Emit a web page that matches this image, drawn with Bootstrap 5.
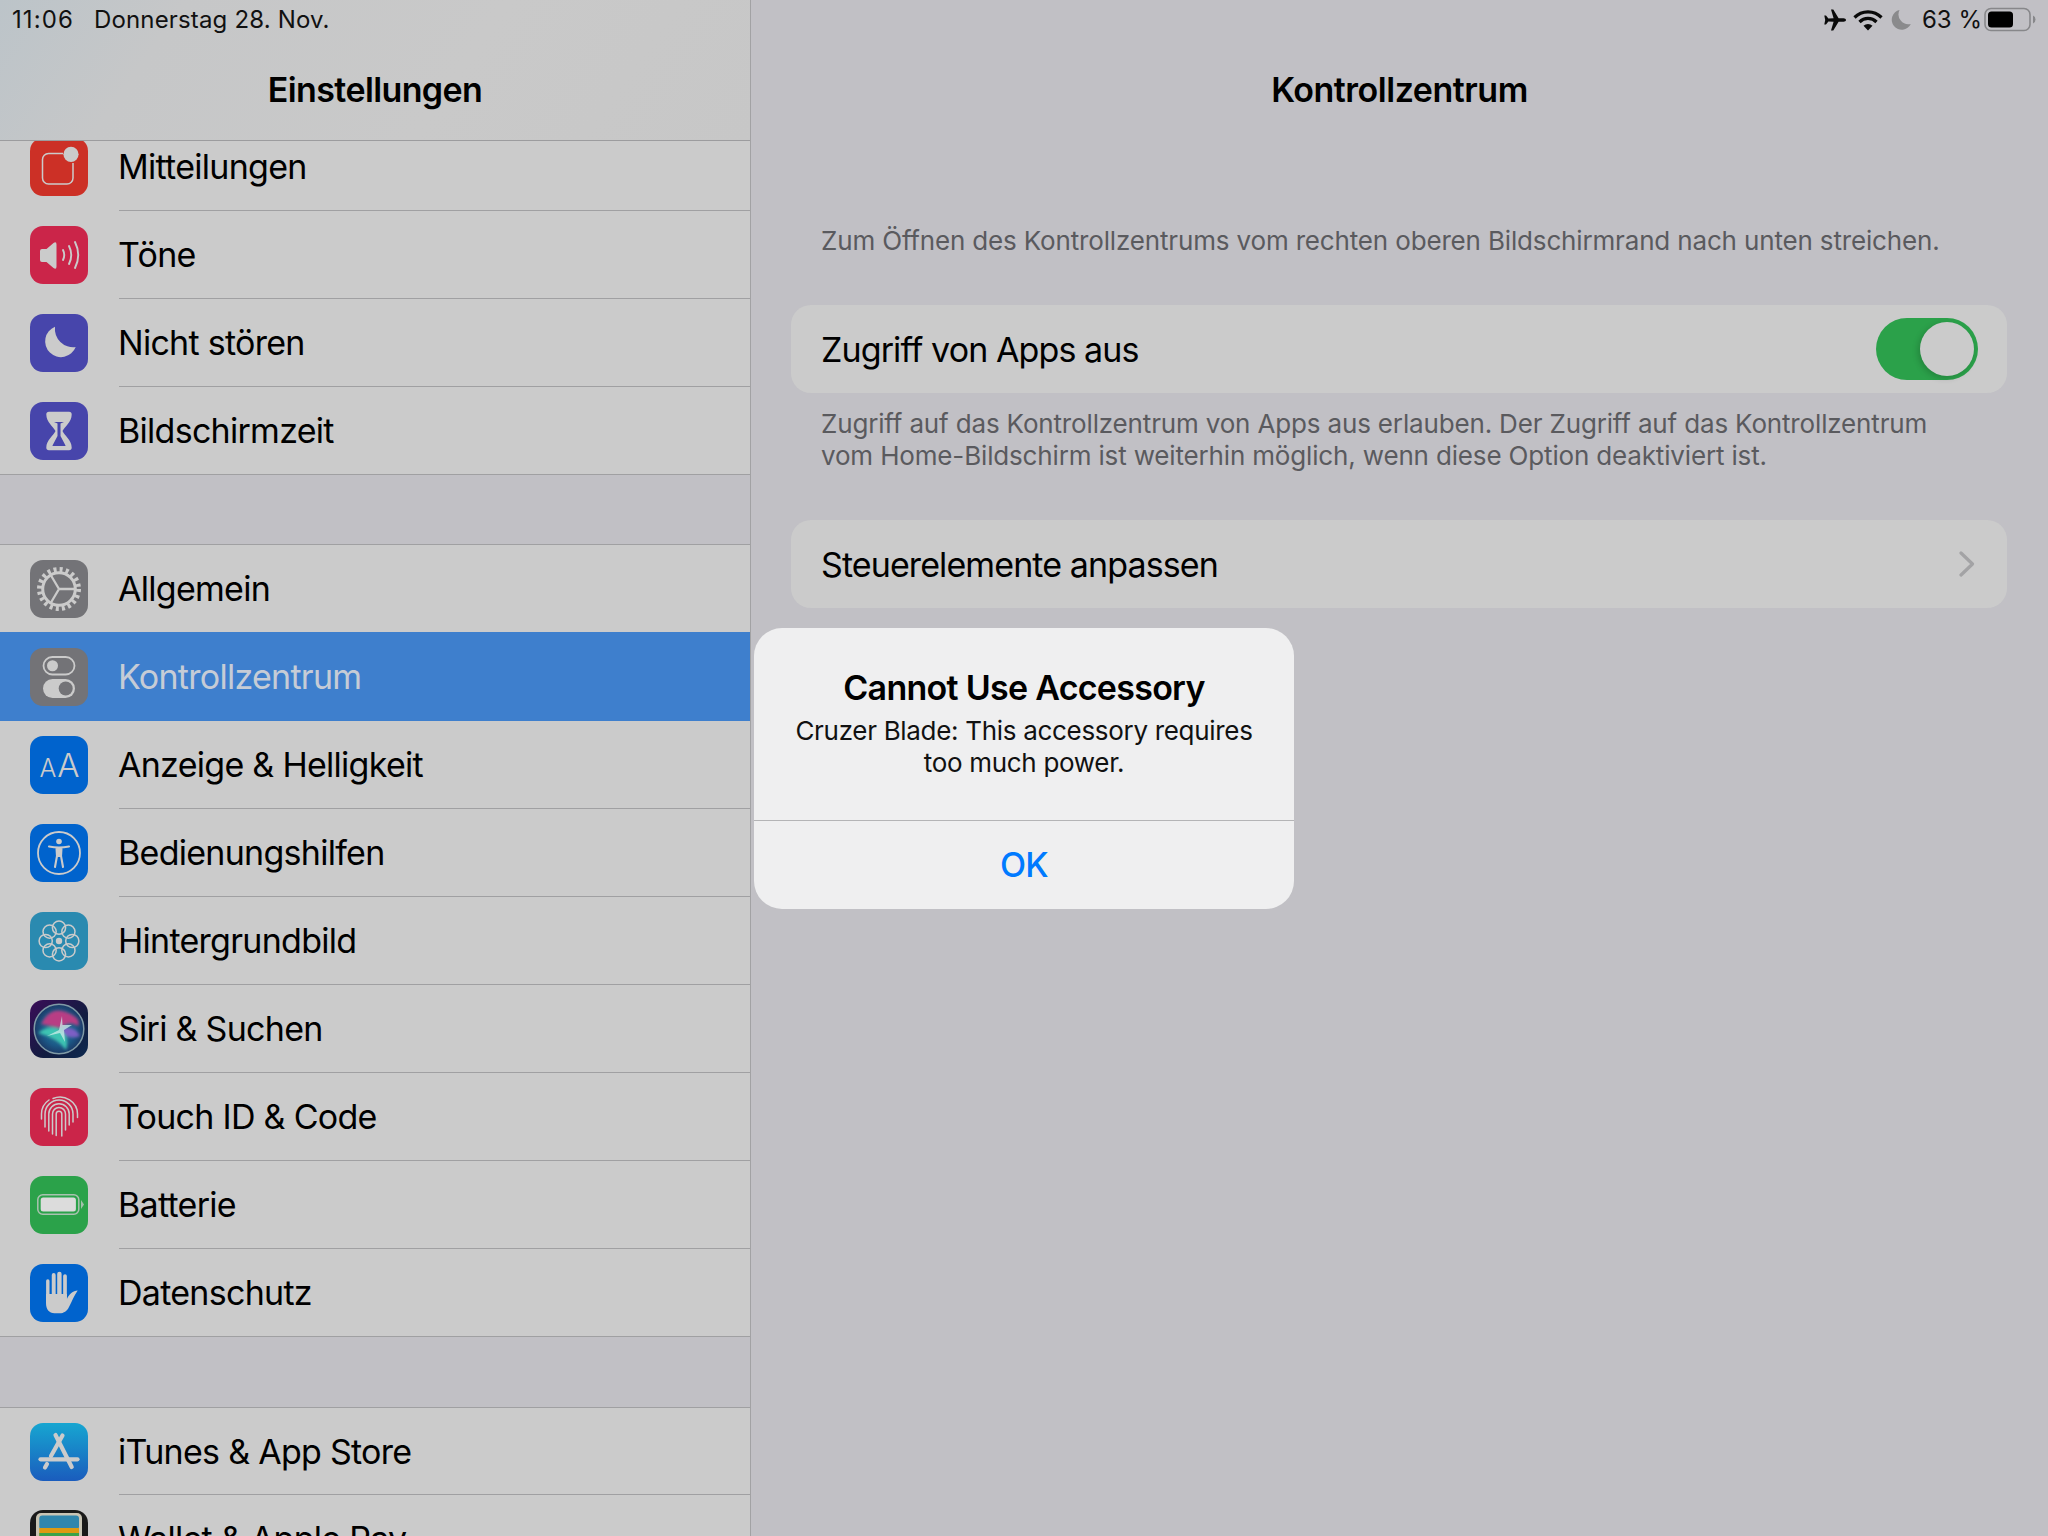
<!DOCTYPE html>
<html lang="de">
<head>
<meta charset="utf-8">
<title>Kontrollzentrum</title>
<link href="https://cdn.jsdelivr.net/npm/bootstrap@5.3.0/dist/css/bootstrap.min.css" rel="stylesheet">
<style>
html,body{margin:0;background:#c1c0c5;}
body{font-family:Inter,"Liberation Sans",sans-serif;color:#000;}
.ipad{width:2048px;height:1536px;overflow:hidden;position:relative;background:#c1c0c5;}
.side{width:751px;flex:none;border-right:1px solid #a2a2a4;background:#c1c0c5;}
.side-head{height:141px;border-bottom:1px solid #9c9c9e;background:linear-gradient(125deg,#bcc4c9 0,#c6c7c8 22%,#c9c9c9 60%,#c7c7c7 100%);position:relative;}
.clock{height:40px;font-size:24px;letter-spacing:.16px;color:#111;padding-left:12px;gap:20px;}
.clock-time{letter-spacing:1.1px;}
.bar-title{font-size:34px;font-weight:600;letter-spacing:-.62px;line-height:40px;text-align:center;}
.side-head .bar-title{margin-top:30px;}
.side-scroll{height:1395px;overflow:hidden;}
.rows{background:#cbcbcb;border-bottom:1px solid #a0a0a2;}
.rows-first{margin-top:-18px;}
.rows-next{margin-top:70px;border-top:1px solid #a0a0a2;}
.rows-second{margin-top:69px;}
.rows-next .s-row:first-child{height:87px;}
.s-row{height:88px;padding-left:30px;position:relative;font-size:34px;letter-spacing:-.72px;line-height:40px;}
.s-row::after{content:"";position:absolute;left:119px;right:0;bottom:0;height:1px;background:#a0a0a2;}
.s-row.last::after,.s-row.before-sel::after,.s-row.sel::after{display:none;}
.s-row.last{height:87px;}
.s-row.sel{background:#3e7fcd;color:#c6ccd6;height:89px;}
.s-row.sel .ico{margin-top:1px;}
.ico{width:58px;height:58px;flex:none;margin-right:30px;display:block;}
.main-pane{flex:1 1 auto;min-width:0;}
.main-head{height:140px;position:relative;}
.main-head .bar-title{padding-top:70px;letter-spacing:-.48px;}
.status-r{position:absolute;top:0;right:12px;height:40px;font-size:24px;letter-spacing:0;color:#111;}
.moon-gap{margin-right:11px;}
.plane-gap{margin-right:6px;}
.batt-gap{margin-left:2px;}
.foot{font-size:26px;letter-spacing:-.16px;line-height:32px;color:#5a5a5e;padding:0 70px;margin-bottom:0;}
.foot-a{margin-top:85px;height:80px;}
.foot-b{margin-top:15px;height:112px;}
.cell{height:88px;margin:0 41px 0 40px;background:#cbcbcb;border-radius:20px;padding:0 30px;font-size:34px;letter-spacing:-.9px;}
.sw{width:102px;height:62px;border-radius:31px;background:#2ba14a;position:relative;margin-right:-1px;}
.sw::after{content:"";position:absolute;right:4px;top:4px;width:54px;height:54px;border-radius:50%;background:#cbcbcb;box-shadow:-2px 2px 6px rgba(0,0,0,.18);}
.chev{margin-right:2px;}
.alert-box{position:absolute;left:754px;top:628px;width:540px;height:281px;background:#efeff0;border-radius:28px;text-align:center;}
.alert-text{height:193px;padding-top:40px;border-bottom:1px solid #b4b4b6;}
.alert-title{font-size:34px;font-weight:600;letter-spacing:-.72px;line-height:40px;}
.alert-msg{font-size:26px;letter-spacing:-.31px;line-height:32px;margin-top:7px;color:#111;}
.alert-ok{height:87px;font-size:34px;font-weight:500;color:#007aff;letter-spacing:-.6px;}
</style>
</head>
<body>
<div class="ipad d-flex">
  <aside class="side d-flex flex-column">
    <div class="side-head">
      <div class="clock d-flex align-items-center"><span class="clock-time">11:06</span><span>Donnerstag 28. Nov.</span></div>
      <div class="bar-title">Einstellungen</div>
    </div>
    <div class="side-scroll">
      <div class="rows rows-first">
        <div class="s-row d-flex align-items-center">
          <svg class="ico" viewBox="0 0 58 58"><rect width="58" height="58" rx="13" fill="#cc3026"/><path d="M33 15.5H18.5a6 6 0 0 0-6 6V40a6 6 0 0 0 6 6H37a6 6 0 0 0 6-6V25" fill="none" stroke="#cbcbcb" stroke-width="1.5"/><circle cx="41" cy="16.3" r="7.6" fill="#cbcbcb"/></svg>
          <span>Mitteilungen</span>
        </div>
        <div class="s-row d-flex align-items-center">
          <svg class="ico" viewBox="0 0 58 58"><rect width="58" height="58" rx="13" fill="#cb2549"/><path d="M10 25q0-2 2-2h4.500L23.500 17q3-2 3 1.500v22q0 3.500-3 1.500L16.500 36H12q-2 0-2-2z" fill="#cbcbcb"/><g fill="none" stroke="#cbcbcb" stroke-width="1.900" stroke-linecap="round"><path d="M33 24q2.500 5 0 10"/><path d="M39 20q4.500 9 0 18"/><path d="M45 16q6.500 13 0 26"/></g></svg>
          <span>Töne</span>
        </div>
        <div class="s-row d-flex align-items-center">
          <svg class="ico" viewBox="0 0 58 58"><rect width="58" height="58" rx="13" fill="#4745ab"/><path d="M25 12.700A15.800 15.800 0 1 0 45.700 33 18.300 18.300 0 0 1 25 12.700Z" fill="#cbcbcb"/></svg>
          <span>Nicht stören</span>
        </div>
        <div class="s-row last d-flex align-items-center">
          <svg class="ico" viewBox="0 0 58 58"><rect width="58" height="58" rx="13" fill="#4745ab"/><path d="M19 9.700H39q2.700 0 2.700 2.700C41.700 20 34.500 24.500 32.500 29c2 4.500 9.200 9 9.200 16.500q0 2.700-2.700 2.700H19q-2.700 0-2.700-2.700C16.300 38 23.500 33.500 25.500 29c-2-4.500-9.200-9-9.200-16.600q0-2.700 2.700-2.700Z" fill="#cbcbcb"/><path d="M24 20h10l-3.500 1.600V34l5 9.500q0 .5-.5.500H23q-.5 0-.5-.5l5-9.500V21.600Z" fill="#4745ab"/></svg>
          <span>Bildschirmzeit</span>
        </div>
      </div>
      <div class="rows rows-next rows-second">
        <div class="s-row before-sel d-flex align-items-center">
          <svg class="ico" viewBox="0 0 58 58"><rect width="58" height="58" rx="13" fill="#737377"/><g fill="none" stroke="#cbcbcb"><circle cx="29" cy="29" r="19.500" stroke-width="5" stroke-dasharray="3 3.130"/><circle cx="29" cy="29" r="16.300" stroke-width="3"/><path d="M29 29H45M29 29 21 15.500M29 29 21 42.500" stroke-width="2.300"/></g></svg>
          <span>Allgemein</span>
        </div>
        <div class="s-row sel d-flex align-items-center">
          <svg class="ico" viewBox="0 0 58 58"><rect width="58" height="58" rx="13" fill="#737377"/><rect x="13.500" y="9" width="31" height="17.500" rx="8.750" fill="none" stroke="#cbcbcb" stroke-width="1.800"/><circle cx="22.500" cy="17.750" r="5.500" fill="#cbcbcb"/><rect x="13" y="31" width="32" height="19" rx="9.500" fill="#cbcbcb"/><circle cx="35.700" cy="40.500" r="7" fill="#737377"/></svg>
          <span>Kontrollzentrum</span>
        </div>
        <div class="s-row d-flex align-items-center">
          <svg class="ico" viewBox="0 0 58 58"><rect width="58" height="58" rx="13" fill="#0063cd"/><text x="9.500" y="41" font-family="Inter" font-size="25" font-weight="300" fill="#cbcbcb">A</text><text x="27.200" y="41" font-family="Inter" font-size="33" font-weight="300" fill="#cbcbcb">A</text></svg>
          <span>Anzeige &amp; Helligkeit</span>
        </div>
        <div class="s-row d-flex align-items-center">
          <svg class="ico" viewBox="0 0 58 58"><rect width="58" height="58" rx="13" fill="#0063cd"/><circle cx="29" cy="29" r="21" fill="none" stroke="#cbcbcb" stroke-width="1.800"/><circle cx="29" cy="17.500" r="2.800" fill="#cbcbcb"/><path d="M19 22.500q10 2 20 0M26.500 24l.5 8-2 11M31.500 24l-.5 8 2 11M27 32h4" fill="none" stroke="#cbcbcb" stroke-width="2.100" stroke-linecap="round"/><path d="M26.500 24h5v8h-5z" fill="#cbcbcb"/></svg>
          <span>Bedienungshilfen</span>
        </div>
        <div class="s-row d-flex align-items-center">
          <svg class="ico" viewBox="0 0 58 58"><rect width="58" height="58" rx="13" fill="#2a8ab0"/><g fill="none" stroke="#cbcbcb" stroke-width="1.500"><circle cx="42.300" cy="29" r="6.600"/><circle cx="38.400" cy="38.400" r="6.600"/><circle cx="29" cy="42.300" r="6.600"/><circle cx="19.600" cy="38.400" r="6.600"/><circle cx="15.700" cy="29" r="6.600"/><circle cx="19.600" cy="19.600" r="6.600"/><circle cx="29" cy="15.700" r="6.600"/><circle cx="38.400" cy="19.600" r="6.600"/></g><circle cx="29" cy="29" r="3.200" fill="#cbcbcb"/></svg>
          <span>Hintergrundbild</span>
        </div>
        <div class="s-row d-flex align-items-center">
          <svg class="ico" viewBox="0 0 58 58"><defs><linearGradient id="sb" x1="0" y1="0" x2="1" y2="1"><stop offset="0" stop-color="#3a0d58"/><stop offset=".6" stop-color="#121c40"/><stop offset="1" stop-color="#0d2a50"/></linearGradient><radialGradient id="sc" cx=".5" cy=".5" r=".55"><stop offset="0" stop-color="#2f8a96"/><stop offset=".6" stop-color="#1c5a88"/><stop offset="1" stop-color="#1b2f5c"/></radialGradient><filter id="sf" x="-30%" y="-30%" width="160%" height="160%"><feGaussianBlur stdDeviation="1.800"/></filter></defs><rect width="58" height="58" rx="13" fill="url(#sb)"/><circle cx="29" cy="29" r="24.800" fill="url(#sc)" stroke="#7f9aa6" stroke-width="1.500"/><g filter="url(#sf)"><path d="M11 24Q20 6 36 12T48 26Q40 20 30 28Z" fill="#b83c84"/><path d="M8 33Q20 24 30 30T36 50Q28 38 8 33Z" fill="#3cc4b2"/><path d="M32 28Q46 26 50 36 40 40 34 34Z" fill="#7d5ec4"/></g><path d="M29 30 32 16 32.500 25 42 25 34 30 35 42 30 33 17 36Z" fill="#cfeeea" opacity=".75"/></svg>
          <span>Siri &amp; Suchen</span>
        </div>
        <div class="s-row d-flex align-items-center">
          <svg class="ico" viewBox="0 0 58 58"><rect width="58" height="58" rx="13" fill="#cb2549"/><g fill="none" stroke="#cbcbcb" stroke-width="1.500" stroke-linecap="round"><path d="M11.500 31V26A17.500 17 0 0 1 19 12"/><path d="M23 10.500a17.500 17 0 0 1 24.500 15.500v3.500"/><path d="M15 39V26a14 14 0 0 1 28 0v8"/><path d="M18.800 43V26a10.200 10.200 0 0 1 20.400 0v11"/><path d="M22.500 46V26a6.500 6.500 0 0 1 13 0v16"/><path d="M26.200 47.500V26a2.800 2.800 0 0 1 5.600 0v22"/></g></svg>
          <span>Touch ID &amp; Code</span>
        </div>
        <div class="s-row d-flex align-items-center">
          <svg class="ico" viewBox="0 0 58 58"><rect width="58" height="58" rx="13" fill="#2ba24a"/><rect x="7.800" y="18.800" width="41" height="19.500" rx="5" fill="none" stroke="#cbcbcb" stroke-opacity=".8" stroke-width="1.500"/><rect x="10.700" y="21.600" width="35.200" height="14" rx="2.500" fill="#dcdcdc"/><path d="M51 24l3 4.500-3 4.500z" fill="#cbcbcb" opacity=".75"/></svg>
          <span>Batterie</span>
        </div>
        <div class="s-row last d-flex align-items-center">
          <svg class="ico" viewBox="0 0 58 58"><rect width="58" height="58" rx="13" fill="#0063cd"/><g fill="none" stroke="#cbcbcb" stroke-linecap="round"><path d="M17.800 17V34" stroke-width="3.400"/><path d="M23.700 11V32" stroke-width="3.900"/><path d="M29.400 10V32" stroke-width="4.400"/><path d="M35 12V34" stroke-width="3.700"/></g><path d="M16 30h20.900v5C39 30 43 27 47.700 26.500 44 32 42 37 39 43c-2 4-5 6.300-9.500 6.300h-5C19 49.300 16 45 16 39Z" fill="#cbcbcb"/></svg>
          <span>Datenschutz</span>
        </div>
      </div>
      <div class="rows rows-next">
        <div class="s-row d-flex align-items-center">
          <svg class="ico" viewBox="0 0 58 58"><defs><linearGradient id="ag" x1="0" y1="0" x2="0" y2="1"><stop offset="0" stop-color="#17a6d1"/><stop offset="1" stop-color="#1a5cbd"/></linearGradient></defs><rect width="58" height="58" rx="13" fill="url(#ag)"/><g fill="none" stroke="#cbcbcb" stroke-width="4.200" stroke-linecap="round"><path d="M25.500 12 41.700 44"/><path d="M32.500 12.500 21 33"/><path d="M10.500 36.300H47.500"/><path d="M15 44.500 17 41"/></g></svg>
          <span>iTunes &amp; App Store</span>
        </div>
        <div class="s-row last d-flex align-items-center">
          <svg class="ico" viewBox="0 0 58 58"><rect width="58" height="58" rx="13" fill="#1a1a1a"/><rect x="6" y="3" width="46" height="48" rx="5" fill="#c8c4b4"/><rect x="9.300" y="5.500" width="39.700" height="14" rx="3" fill="#2f86ad"/><rect x="9.300" y="18" width="39.700" height="10" fill="#dc9a12"/><rect x="9.300" y="23" width="39.700" height="12" fill="#3aa24a"/><rect x="9.300" y="33" width="39.700" height="12" fill="#cc3f33"/></svg>
          <span>Wallet &amp; Apple Pay</span>
        </div>
      </div>
    </div>
  </aside>
  <main class="main-pane">
    <div class="main-head">
      <div class="bar-title">Kontrollzentrum</div>
      <div class="status-r d-flex align-items-center">
        <svg width="24" height="24" viewBox="0 0 24 24" class="plane-gap"><path d="M23 12c0-1-1.200-1.700-2.400-1.700h-5L10.300 1.500H8l2.600 8.800-5.200.3L3 7.600H1.300L2.200 12l-.9 4.400H3l2.400-3 5.200.3L8 22.500h2.300l5.300-8.800h5c1.200 0 2.400-.7 2.400-1.700Z" fill="#0a0a0a"/></svg>
        <svg width="30" height="24" viewBox="0 0 30 24" class="me-2"><g fill="none" stroke="#0a0a0a" stroke-width="3.200"><path d="M1.500 9.500a19 19 0 0 1 27 0"/><path d="M6.500 14a12 12 0 0 1 17 0"/></g><path d="M10.500 17.800a6.500 6.500 0 0 1 9 0L15 22.500Z" fill="#0a0a0a"/></svg>
        <svg width="20" height="22" viewBox="0 0 20 22" class="moon-gap"><path d="M8.500 1A10 10 0 1 0 19.800 15 10 10 0 0 1 8.500 1Z" fill="#8a8a8c"/></svg>
        <span>63 %</span>
        <svg width="52" height="26" viewBox="0 0 52 26" class="batt-gap"><rect x="1" y="1.500" width="45" height="22" rx="6" fill="none" stroke="#87878a" stroke-width="1.600"/><rect x="4" y="4.500" width="25" height="16" rx="3.500" fill="#000"/><path d="M49 8.500q2.500 1 2.500 4t-2.500 4z" fill="#87878a"/></svg>
      </div>
    </div>
    <p class="foot foot-a">Zum Öffnen des Kontrollzentrums vom rechten oberen Bildschirmrand nach unten streichen.</p>
    <div class="cell d-flex align-items-center justify-content-between"><span>Zugriff von Apps aus</span><div class="sw"></div></div>
    <p class="foot foot-b">Zugriff auf das Kontrollzentrum von Apps aus erlauben. Der Zugriff auf das Kontrollzentrum<br>vom Home-Bildschirm ist weiterhin möglich, wenn diese Option deaktiviert ist.</p>
    <div class="cell d-flex align-items-center justify-content-between"><span>Steuerelemente anpassen</span>
      <svg class="chev" width="16" height="26" viewBox="0 0 16 26" fill="none"><path d="M2 2 13.500 13 2 24" stroke="#a3a3a5" stroke-width="3.200" stroke-linecap="round" stroke-linejoin="round"/></svg>
    </div>
  </main>
  <div class="alert-box" role="alertdialog">
    <div class="alert-text">
      <div class="alert-title">Cannot Use Accessory</div>
      <div class="alert-msg">Cruzer Blade: This accessory requires<br>too much power.</div>
    </div>
    <div class="alert-ok d-flex align-items-center justify-content-center">OK</div>
  </div>
</div>
<script src="https://cdn.jsdelivr.net/npm/bootstrap@5.3.0/dist/js/bootstrap.bundle.min.js"></script>
</body>
</html>
